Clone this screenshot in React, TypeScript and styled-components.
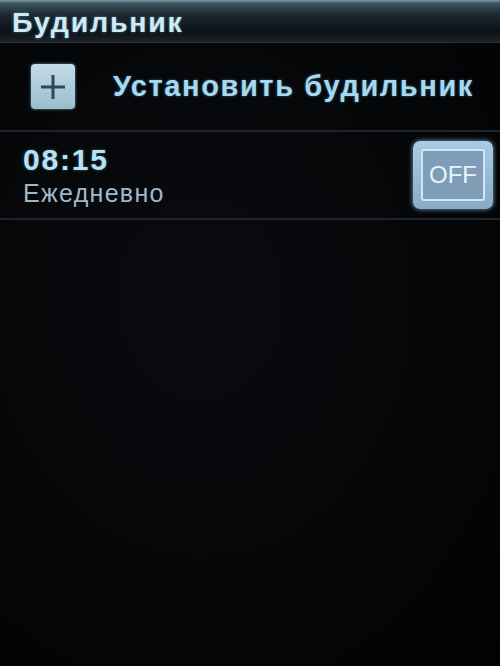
import React from "react";
import styled, { createGlobalStyle } from "styled-components";

const Global = createGlobalStyle`
  html, body { margin: 0; padding: 0; background: #040507; }
  #root { width: 500px; height: 666px; }
`;

const Screen = styled.div`
  width: 500px;
  height: 666px;
  background: radial-gradient(ellipse at 40% 45%, #0a0b0e 0%, #050608 60%, #020203 100%);
  font-family: "Liberation Sans", Arial, sans-serif;
  display: flex;
  flex-direction: column;
  overflow: hidden;
`;

const Header = styled.div`
  height: 43px;
  box-sizing: border-box;
  padding: 3px 0 0 12px;
  background: linear-gradient(180deg, #7a98a6 0%, #3e5661 8%, #1b2830 35%, #0c1217 75%, #1b2429 100%);
  border-bottom: 1px solid #2a333a;
  display: flex;
  align-items: center;
`;

const Title = styled.div`
  font-size: 28.5px;
  font-weight: bold;
  color: #cfeaf4;
  letter-spacing: 1.8px;
  text-shadow: 0 0 3px rgba(120, 210, 240, 0.5);
`;

const Row = styled.div<{ $h: number }>`
  height: ${(p) => p.$h}px;
  box-sizing: border-box;
  border-bottom: 2px solid #1f252a;
  display: flex;
  align-items: center;
`;

const AddRow = styled(Row)`
  padding-left: 31px;
  gap: 38px;
`;

const PlusBox = styled.div`
  width: 44px;
  height: 45px;
  border-radius: 4px;
  background: linear-gradient(180deg, #c2dbe8 0%, #9cbccd 100%);
  box-shadow: 0 0 3px rgba(140, 210, 240, 0.7);
  display: flex;
  align-items: center;
  justify-content: center;
`;

const AddLabel = styled.div`
  font-size: 29px;
  font-weight: bold;
  color: #a6d8f0;
  letter-spacing: 1.6px;
  text-shadow: 0 0 3px rgba(100, 190, 240, 0.5);
`;

const AlarmRow = styled(Row)`
  padding: 0 7px 0 23px;
  justify-content: space-between;
`;

const AlarmInfo = styled.div`
  display: flex;
  flex-direction: column;
  gap: 2px;
`;

const Time = styled.div`
  font-size: 30px;
  font-weight: bold;
  color: #b8e2f4;
  letter-spacing: 1.8px;
  text-shadow: 0 0 3px rgba(100, 190, 240, 0.5);
`;

const Repeat = styled.div`
  font-size: 25px;
  color: #9fb8c8;
  letter-spacing: 1.3px;
`;

const Toggle = styled.div`
  width: 80px;
  height: 68px;
  box-sizing: border-box;
  border-radius: 7px;
  background: linear-gradient(180deg, #a9cce4 0%, #8aaac4 100%);
  box-shadow: 0 0 5px rgba(140, 210, 255, 0.8);
  padding: 8px;
  display: flex;
`;

const ToggleInner = styled.div`
  flex: 1;
  border: 2px solid #cfe6f4;
  border-radius: 3px;
  background: #7f9db6;
  display: flex;
  align-items: center;
  justify-content: center;
  font-size: 24px;
  color: #e8f4fa;
`;

export default function App() {
  return (
    <>
      <Global />
      <Screen>
        <Header>
          <Title>Будильник</Title>
        </Header>
        <AddRow $h={89}>
          <PlusBox>
            <svg width="28" height="28" viewBox="0 0 28 28">
              <path d="M14 2 V26 M2 14 H26" stroke="#2f4654" strokeWidth="3" />
            </svg>
          </PlusBox>
          <AddLabel>Установить будильник</AddLabel>
        </AddRow>
        <AlarmRow $h={88}>
          <AlarmInfo>
            <Time>08:15</Time>
            <Repeat>Ежедневно</Repeat>
          </AlarmInfo>
          <Toggle>
            <ToggleInner>OFF</ToggleInner>
          </Toggle>
        </AlarmRow>
      </Screen>
    </>
  );
}
